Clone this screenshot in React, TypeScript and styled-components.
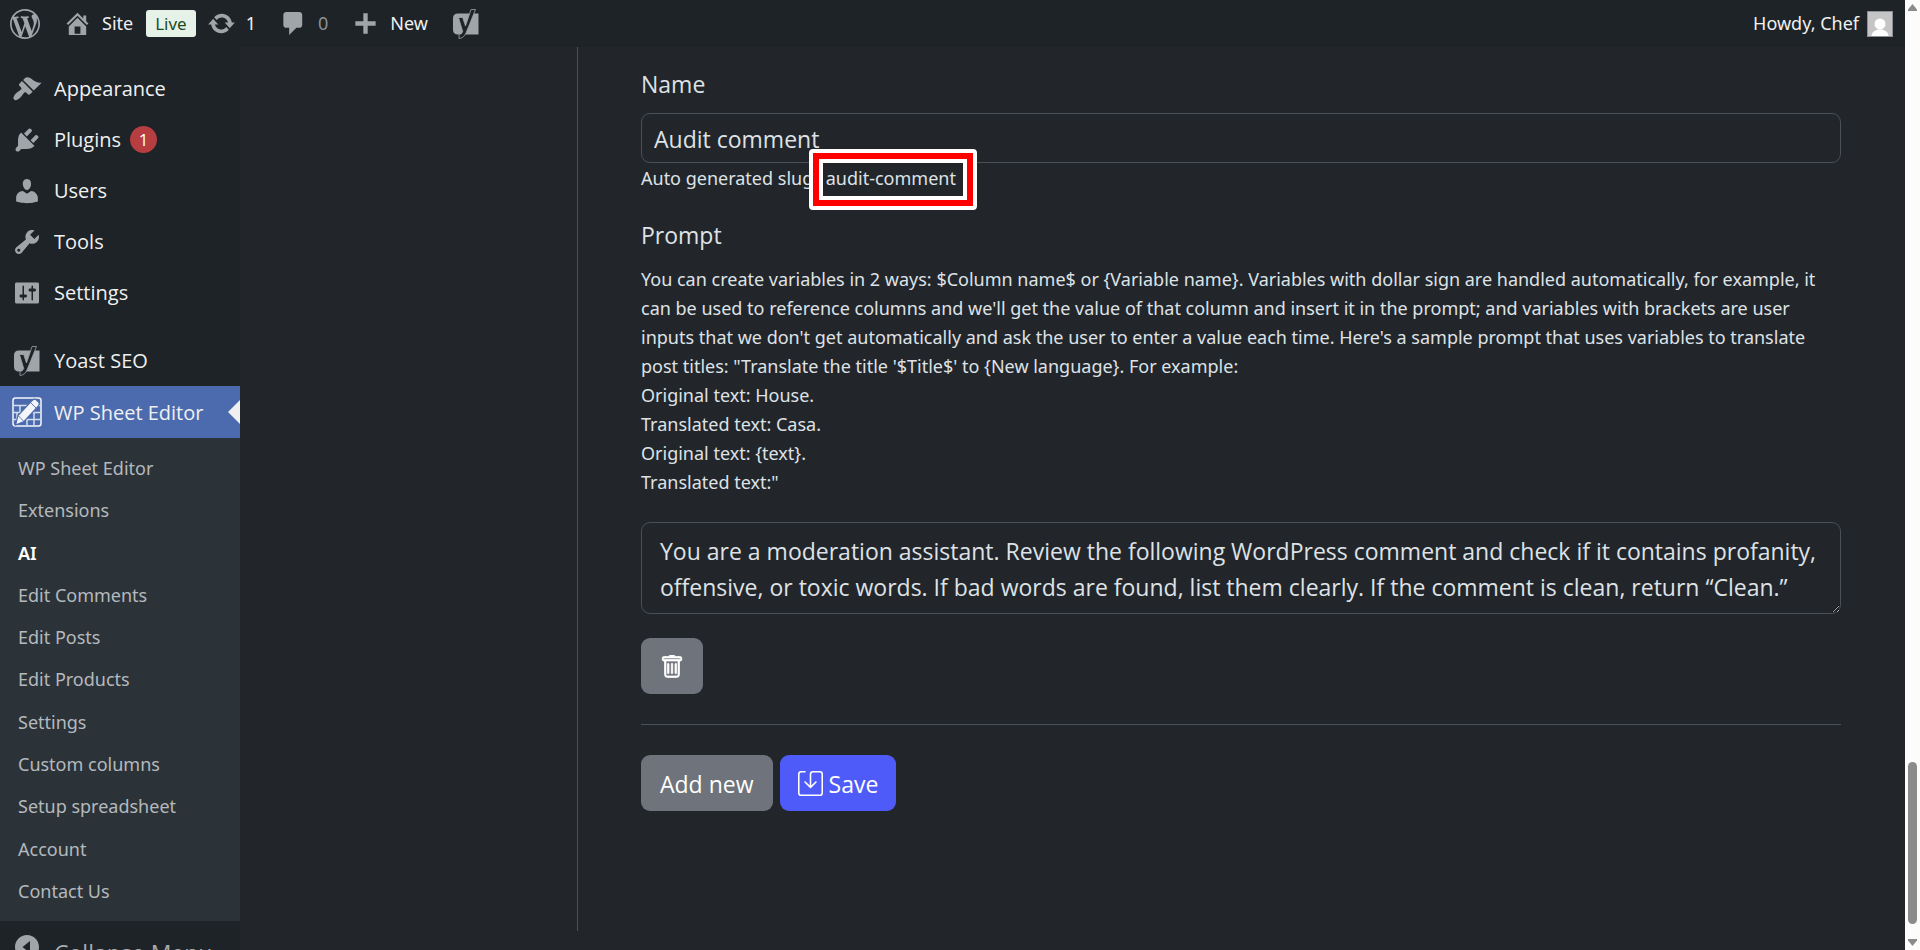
import React from "react";
import styled, { createGlobalStyle } from "styled-components";
import { BsSave, BsTrash } from "react-icons/bs";

const Global = createGlobalStyle`
  *, *::before, *::after { box-sizing: border-box; }
  html, body, #root { height: 100%; }
  body {
    margin: 0;
    overflow: hidden;
    background: #22262b;
    color: #dee2e6;
    font-family: "Noto Sans", "Open Sans", sans-serif;
    font-size: 18px;
  }
  h1, h2, p, ul { margin: 0; padding: 0; }
  ul { list-style: none; }
  a { color: inherit; text-decoration: none; }
  button, input, textarea { font: inherit; color: inherit; }
`;

const largeText = `
  font-family: "Open Sans", "Noto Sans", sans-serif;
  font-size: 23px;
`;

const menuText = `
  font-family: "Open Sans", "Noto Sans", sans-serif;
  font-size: 20px;
`;

const Viewport = styled.div`
  display: grid;
  grid-template-columns: 1fr 15px;
  height: 100vh;
`;

const Page = styled.div`
  display: flex;
  flex-direction: column;
  min-width: 0;
  min-height: 0;
`;

const AdminBar = styled.header`
  display: flex;
  align-items: center;
  justify-content: space-between;
  flex: none;
  height: 47px;
  padding: 0 12px 0 10px;
  background: #1d2327;
  color: #f0f0f1;
`;

const BarGroup = styled.nav`
  display: flex;
  align-items: center;
`;

const BarLink = styled.a<{ $gap?: number; $space?: number; $dim?: boolean }>`
  display: flex;
  align-items: center;
  gap: ${(p) => p.$gap ?? 8}px;
  margin-right: ${(p) => p.$space ?? 23}px;
  color: ${(p) => (p.$dim ? "#8c8f94" : "#f0f0f1")};
  line-height: 27px;
`;

const LiveTag = styled.span`
  padding: 0 9px;
  margin-right: 11px;
  border-radius: 3px;
  background: #e6f2e8;
  color: #1d4a1d;
  font-size: 17px;
  line-height: 27px;
`;

const Glyph = styled.svg`
  display: block;
  flex: none;
  fill: #a0a5aa;
`;

const Avatar = styled.svg`
  display: block;
  border: 1px solid #8c8f94;
`;

const Body = styled.div`
  display: flex;
  flex: 1;
  min-height: 0;
`;

const Sidebar = styled.nav`
  flex: none;
  width: 240px;
  padding-top: 16px;
  overflow: hidden;
  background: #1d2327;
`;

const MenuLink = styled.a<{ $active?: boolean; $before?: number }>`
  position: relative;
  display: flex;
  align-items: center;
  gap: 12px;
  height: ${(p) => (p.$active ? 52 : 51)}px;
  margin-top: ${(p) => p.$before ?? 0}px;
  padding-left: 12px;
  background: ${(p) => (p.$active ? "#4c6bae" : "transparent")};
  color: #f0f0f1;
  ${menuText}
`;

const Pointer = styled.span`
  position: absolute;
  right: 0;
  top: 14px;
  border: 12px solid transparent;
  border-left-width: 0;
  border-right-color: #f0f0f1;
`;

const IconSlot = styled.span`
  display: flex;
  justify-content: center;
  width: 30px;
`;

const Count = styled.span`
  width: 27px;
  height: 27px;
  margin-left: -3px;
  border-radius: 50%;
  background: #b63d40;
  color: #fff;
  font-size: 17px;
  line-height: 27px;
  text-align: center;
`;

const Submenu = styled.ul`
  display: grid;
  grid-template-rows: repeat(11, 1fr);
  height: 483px;
  padding: 9px 0;
  background: #2c3338;
`;

const SubLink = styled.a<{ $current?: boolean }>`
  display: flex;
  align-items: center;
  height: 100%;
  padding-left: 18px;
  color: ${(p) => (p.$current ? "#fff" : "#b4b9be")};
  font-weight: ${(p) => (p.$current ? 600 : 400)};
`;

const Collapse = styled.button`
  display: flex;
  align-items: center;
  gap: 12px;
  width: 100%;
  height: 52px;
  padding: 0 0 0 12px;
  border: 0;
  background: none;
  color: #a7aaad;
  white-space: nowrap;
  text-align: left;
  ${largeText}
`;

const CollapseText = styled.span`
  padding-top: 12px;
`;

const Main = styled.main`
  flex: 1;
  min-width: 0;
  padding: 0 0 19px 337px;
`;

const Panel = styled.form`
  height: 100%;
  padding: 19px 64px 0 63px;
  border-left: 1px solid #495057;
`;

const FieldLabel = styled.label`
  display: block;
  line-height: 36px;
  ${largeText}
`;

const TextBox = styled.input`
  display: block;
  width: 100%;
  height: 50px;
  margin-top: 11px;
  padding: 2px 12px 0;
  border: 1px solid #495057;
  border-radius: 9px;
  background: transparent;
  ${largeText}
`;

const Hint = styled.p`
  line-height: 29px;
`;

const HintRow = styled(Hint)`
  padding-top: 1px;
  margin-bottom: 24px;
`;

const Slug = styled.span`
  position: relative;
  padding: 0 3px;
`;

const Highlight = styled.span`
  position: absolute;
  top: -17px;
  right: -18px;
  bottom: -20px;
  left: -14px;
  border: 4px solid #fff;
  border-radius: 4px;
  &::before {
    content: "";
    position: absolute;
    inset: 0;
    border: 6px solid #f00;
  }
  &::after {
    content: "";
    position: absolute;
    inset: 6px;
    border: 4px solid #fff;
  }
`;

const PromptHint = styled(Hint)`
  margin-top: 12px;
`;

const PromptBox = styled.textarea`
  display: block;
  width: 100%;
  height: 92px;
  margin: 25px 0 24px;
  padding: 10px 18px 8px;
  border: 1px solid #495057;
  border-radius: 9px;
  background: transparent;
  line-height: 36px;
  ${largeText}
`;

const Button = styled.button<{ $primary?: boolean }>`
  display: inline-flex;
  align-items: center;
  justify-content: center;
  gap: 6px;
  height: 56px;
  padding: 1px ${(p) => (p.$primary ? 18 : 19)}px 0;
  border: 0;
  border-radius: 9px;
  background: ${(p) => (p.$primary ? "#4f5bf9" : "#6f737b")};
  color: #fff;
  ${largeText}
`;

const IconButton = styled(Button)`
  width: 62px;
`;

const Divider = styled.hr`
  height: 1px;
  margin: 30px 0;
  border: 0;
  background: #495057;
`;

const Actions = styled.div`
  display: flex;
  gap: 7px;
`;

const ScrollTrack = styled.div`
  display: flex;
  flex-direction: column;
  align-items: center;
  padding: 4px 0;
  background: #fcfcfc;
`;

const ScrollThumb = styled.div`
  width: 9px;
  height: 162px;
  margin: auto 0 15px;
  border-radius: 5px;
  background: #8b8b8b;
`;

const ICONS = {
  wordpress:
    "M20 10c0-5.51-4.49-10-10-10C4.48 0 0 4.49 0 10c0 5.52 4.48 10 10 10 5.51 0 10-4.48 10-10zM7.78 15.37L4.37 6.22c.55-.02 1.17-.08 1.17-.08.5-.06.44-1.13-.06-1.11 0 0-1.45.11-2.37.11-.18 0-.37 0-.58-.01C4.12 2.69 6.87 1.11 10 1.11c2.33 0 4.45.87 6.05 2.34-.68-.11-1.65.39-1.65 1.58 0 .74.45 1.36.9 2.1.35.61.55 1.36.55 2.46 0 1.49-1.4 5-1.4 5l-3.03-8.37c.54-.02.82-.17.82-.17.5-.05.44-1.25-.06-1.22 0 0-1.44.12-2.38.12-.87 0-2.33-.12-2.33-.12-.5-.03-.56 1.2-.06 1.22l.92.08 1.26 3.41zM17.41 10c.24-.64.74-1.87.43-4.25.7 1.29 1.05 2.71 1.05 4.25 0 3.29-1.73 6.24-4.4 7.78.97-2.59 1.94-5.2 2.92-7.78zM6.1 18.09C3.12 16.65 1.11 13.53 1.11 10c0-1.3.23-2.48.72-3.59C3.25 10.3 4.67 14.2 6.1 18.09zm4.03-6.63l2.58 6.98c-.86.29-1.76.45-2.71.45-.79 0-1.57-.11-2.29-.33.81-2.38 1.62-4.74 2.42-7.1z",
  home: "M16 8.5l1.53 1.53-1.06 1.06L10 4.6l-6.47 6.47-1.06-1.06L10 2.5l4 4v-2h2v4zm-6-2.46l6 5.99V18H4v-5.97zM12 17v-5H8v5h4z",
  update:
    "M10.2 3.28c3.53 0 6.43 2.61 6.92 6h2.08l-3.5 4-3.5-4h2.32c-.45-1.97-2.21-3.45-4.32-3.45-1.45 0-2.73.71-3.54 1.78L4.95 5.66C6.23 4.2 8.11 3.28 10.2 3.28zm-.4 13.44c-3.52 0-6.43-2.61-6.92-6H.8l3.5-4c1.17 1.33 2.33 2.67 3.5 4H5.48c.45 1.97 2.21 3.45 4.32 3.45 1.45 0 2.73-.71 3.54-1.78l1.71 1.95c-1.28 1.46-3.15 2.38-5.25 2.38z",
  comment:
    "M5 2h9c1.1 0 2 .9 2 2v7c0 1.1-.9 2-2 2h-2l-5 5v-5H5c-1.1 0-2-.9-2-2V4c0-1.1.9-2 2-2z",
  plus: "M17 8.5v3h-5.5V17h-3v-5.5H3v-3h5.5V3h3v5.5z",
  brush:
    "M14.48 11.06L7.41 3.99l1.5-1.5c.5-.56 2.3-.47 3.51.32 1.21.8 1.43 1.28 2.91 2.1 1.18.64 2.45 1.26 4.45.85zm-.71.71L6.7 4.7 4.93 6.47c-.39.39-.39 1.02 0 1.41l1.06 1.06c.39.39.39 1.03 0 1.42-.6.6-1.43 1.11-2.21 1.69-.35.26-.7.53-1.01.84C1.43 14.23.4 16.08 1.4 17.07c.99 1 2.84-.03 4.18-1.36.31-.31.58-.66.85-1.02.57-.78 1.08-1.61 1.69-2.21.39-.39 1.02-.39 1.41 0l1.06 1.06c.39.39 1.02.39 1.41 0z",
  plug: "M13.11 4.36L9.87 7.6 8 5.73l3.24-3.24c.35-.34 1.05-.2 1.56.32.52.51.66 1.21.31 1.55zm-8 1.77l.91-1.12 9.01 9.01-1.19.84c-.71.71-2.63 1.16-3.82 1.16H6.14L4.9 17.26c-.59.59-1.54.59-2.12 0-.59-.58-.59-1.53 0-2.12l1.24-1.24v-3.88c0-1.13.4-3.19 1.09-3.89zm7.26 3.97l3.24-3.24c.34-.35 1.04-.21 1.55.31.52.51.66 1.21.31 1.55l-3.24 3.25z",
  user: "M10 9.25c-2.27 0-2.73-3.44-2.73-3.44C7 4.02 7.82 2 9.97 2c2.16 0 2.98 2.02 2.71 3.81 0 0-.41 3.44-2.68 3.44zm0 2.57L12.72 10c2.39 0 4.52 2.33 4.52 4.53v2.49s-3.65 1.13-7.24 1.13c-3.65 0-7.24-1.13-7.24-1.13v-2.49c0-2.25 1.94-4.48 4.47-4.48z",
  wrench:
    "M16.68 9.77c-1.34 1.34-3.3 1.67-4.95.99l-5.41 6.52c-.99.99-2.59.99-3.58 0s-.99-2.59 0-3.57l6.52-5.42c-.68-1.65-.35-3.61.99-4.95 1.28-1.28 3.12-1.62 4.72-1.06l-2.89 2.89 2.82 2.82 2.86-2.87c.53 1.58.18 3.39-1.08 4.65zM3.81 16.21c.4.39 1.04.39 1.43 0 .4-.4.4-1.04 0-1.43-.39-.4-1.03-.4-1.43 0-.39.39-.39 1.03 0 1.43z",
  sliders:
    "M18 16V4c0-.55-.45-1-1-1H3c-.55 0-1 .45-1 1v12c0 .55.45 1 1 1h14c.55 0 1-.45 1-1zM8 11h1c.55 0 1 .45 1 1s-.45 1-1 1H8v1.5c0 .28-.22.5-.5.5s-.5-.22-.5-.5V13H6c-.55 0-1-.45-1-1s.45-1 1-1h1V5.5c0-.28.22-.5.5-.5s.5.22.5.5V11zm5-2h-1c-.55 0-1-.45-1-1s.45-1 1-1h1V5.5c0-.28.22-.5.5-.5s.5.22.5.5V7h1c.55 0 1 .45 1 1s-.45 1-1 1h-1v5.5c0 .28-.22.5-.5.5s-.5-.22-.5-.5V9z",
  collapse:
    "M10 2c4.42 0 8 3.58 8 8s-3.58 8-8 8-8-3.58-8-8 3.58-8 8-8zm2 12V6l-5 4z",
};

const Dash = ({ name, size = 30 }: { name: keyof typeof ICONS; size?: number }) => (
  <Glyph viewBox="0 0 20 20" width={size} height={size} aria-hidden="true">
    <path d={ICONS[name]} />
  </Glyph>
);

const Yoast = () => (
  <Glyph viewBox="0 0 30 30" width="30" height="30" aria-hidden="true">
    <path d="M7 4.500H27.500V25.500H7q-5 0-5-5v-11q0-5 5-5z" />
    <path
      d="M20 .5h4.500L15 24q-2 5-7 5.500V25.500q3-.3 3.700-3L7.500 8.500h4.200l2.800 8.500z"
      fill="#1d2327"
      stroke="#a0a5aa"
      strokeWidth="0.8"
    />
  </Glyph>
);

const SheetEditor = () => (
  <Glyph viewBox="0 0 30 30" width="30" height="30" aria-hidden="true">
    <rect x="1" y="1" width="28" height="28" rx="2.500" fill="none" stroke="#f4f6fb" strokeWidth="1.500" />
    <path d="M1 8.500h28M1 15.500h28M1 22.500h28M8 8.500v7M5 15.500v7M15 22.500v6.500M15 8.500v7M22 15.500v13.500" stroke="#d5def1" strokeWidth="1.500" />
    <path
      d="M19.500 4q3-3 5-1l2 2q2 2-1 5L12 24.500 3.500 28 6 18.500z"
      fill="#f4f6fb"
      stroke="#4c6bae"
      strokeWidth="1.200"
    />
    <path d="M18.500 5.500l6 6M6.500 19l5.500 5.500" stroke="#4c6bae" strokeWidth="0.900" />
  </Glyph>
);

const SUBMENU = [
  "WP Sheet Editor",
  "Extensions",
  "AI",
  "Edit Comments",
  "Edit Posts",
  "Edit Products",
  "Settings",
  "Custom columns",
  "Setup spreadsheet",
  "Account",
  "Contact Us",
];

const PROMPT =
  "You are a moderation assistant. Review the following WordPress comment and check if it contains profanity, offensive, or toxic words. If bad words are found, list them clearly. If the comment is clean, return “Clean.”";

export default function App() {
  return (
    <Viewport>
      <Global />
      <Page>
        <AdminBar>
          <BarGroup aria-label="Toolbar">
            <BarLink href="#" aria-label="About WordPress">
              <Dash name="wordpress" />
            </BarLink>
            <BarLink href="#" $gap={10} $space={13}>
              <Dash name="home" size={29} />
              Site
            </BarLink>
            <LiveTag>Live</LiveTag>
            <BarLink href="#" $gap={10}>
              <Dash name="update" size={29} />1
            </BarLink>
            <BarLink href="#" $gap={10} $dim>
              <Dash name="comment" size={29} />0
            </BarLink>
            <BarLink href="#" $gap={10}>
              <Dash name="plus" size={29} />
              New
            </BarLink>
            <BarLink href="#" aria-label="Yoast SEO">
              <Yoast />
            </BarLink>
          </BarGroup>
          <BarLink href="#" $space={0}>
            Howdy, Chef
            <Avatar viewBox="0 0 24 24" width="26" height="26" aria-hidden="true">
              <rect width="24" height="24" fill="#c5c5c5" />
              <circle cx="12" cy="12" r="5.500" fill="#fff" />
              <path d="M3.500 24c0-4 4-6.500 8.500-6.500s8.500 2.500 8.500 6.500z" fill="#fff" />
            </Avatar>
          </BarLink>
        </AdminBar>
        <Body>
          <Sidebar aria-label="Main menu">
            <MenuLink href="#">
              <IconSlot><Dash name="brush" /></IconSlot>
              Appearance
            </MenuLink>
            <MenuLink href="#">
              <IconSlot><Dash name="plug" /></IconSlot>
              Plugins
              <Count>1</Count>
            </MenuLink>
            <MenuLink href="#">
              <IconSlot><Dash name="user" /></IconSlot>
              Users
            </MenuLink>
            <MenuLink href="#">
              <IconSlot><Dash name="wrench" /></IconSlot>
              Tools
            </MenuLink>
            <MenuLink href="#">
              <IconSlot><Dash name="sliders" /></IconSlot>
              Settings
            </MenuLink>
            <MenuLink href="#" $before={17}>
              <IconSlot><Yoast /></IconSlot>
              Yoast SEO
            </MenuLink>
            <MenuLink href="#" $active>
              <IconSlot><SheetEditor /></IconSlot>
              WP Sheet Editor
              <Pointer />
            </MenuLink>
            <Submenu>
              {SUBMENU.map((item) => (
                <li key={item}>
                  <SubLink href="#" $current={item === "AI"}>{item}</SubLink>
                </li>
              ))}
            </Submenu>
            <Collapse type="button">
              <IconSlot><Dash name="collapse" /></IconSlot>
              <CollapseText>Collapse Menu</CollapseText>
            </Collapse>
          </Sidebar>
          <Main>
            <Panel>
              <FieldLabel htmlFor="name">Name</FieldLabel>
              <TextBox id="name" defaultValue="Audit comment" />
              <HintRow>
                Auto generated slug: <Slug>audit-comment<Highlight /></Slug>
              </HintRow>
              <FieldLabel htmlFor="prompt">Prompt</FieldLabel>
              <PromptHint>
                You can create variables in 2 ways: $Column name$ or {"{Variable name}"}. Variables with
                dollar sign are handled automatically, for example, it can be used to reference columns and
                we'll get the value of that column and insert it in the prompt; and variables with brackets
                are user inputs that we don't get automatically and ask the user to enter a value each time.
                Here's a sample prompt that uses variables to translate post titles: "Translate the title
                '$Title$' to {"{New language}"}. For example:
                <br />
                Original text: House.
                <br />
                Translated text: Casa.
                <br />
                Original text: {"{text}"}.
                <br />
                Translated text:"
              </PromptHint>
              <PromptBox id="prompt" defaultValue={PROMPT} />
              <IconButton type="button" aria-label="Delete prompt">
                <BsTrash size={24} strokeWidth={0.5} />
              </IconButton>
              <Divider />
              <Actions>
                <Button type="button">Add new</Button>
                <Button type="button" $primary>
                  <BsSave size={25} />
                  Save
                </Button>
              </Actions>
            </Panel>
          </Main>
        </Body>
      </Page>
      <ScrollTrack aria-hidden="true">
        <svg width="9" height="7" viewBox="0 0 9 7"><path d="M4.500 0L9 5.500V7H0V5.500z" fill="#8b8b8b" /></svg>
        <ScrollThumb />
        <svg width="9" height="7" viewBox="0 0 9 7"><path d="M4.500 7L9 1.500V0H0v1.500z" fill="#8b8b8b" /></svg>
      </ScrollTrack>
    </Viewport>
  );
}
